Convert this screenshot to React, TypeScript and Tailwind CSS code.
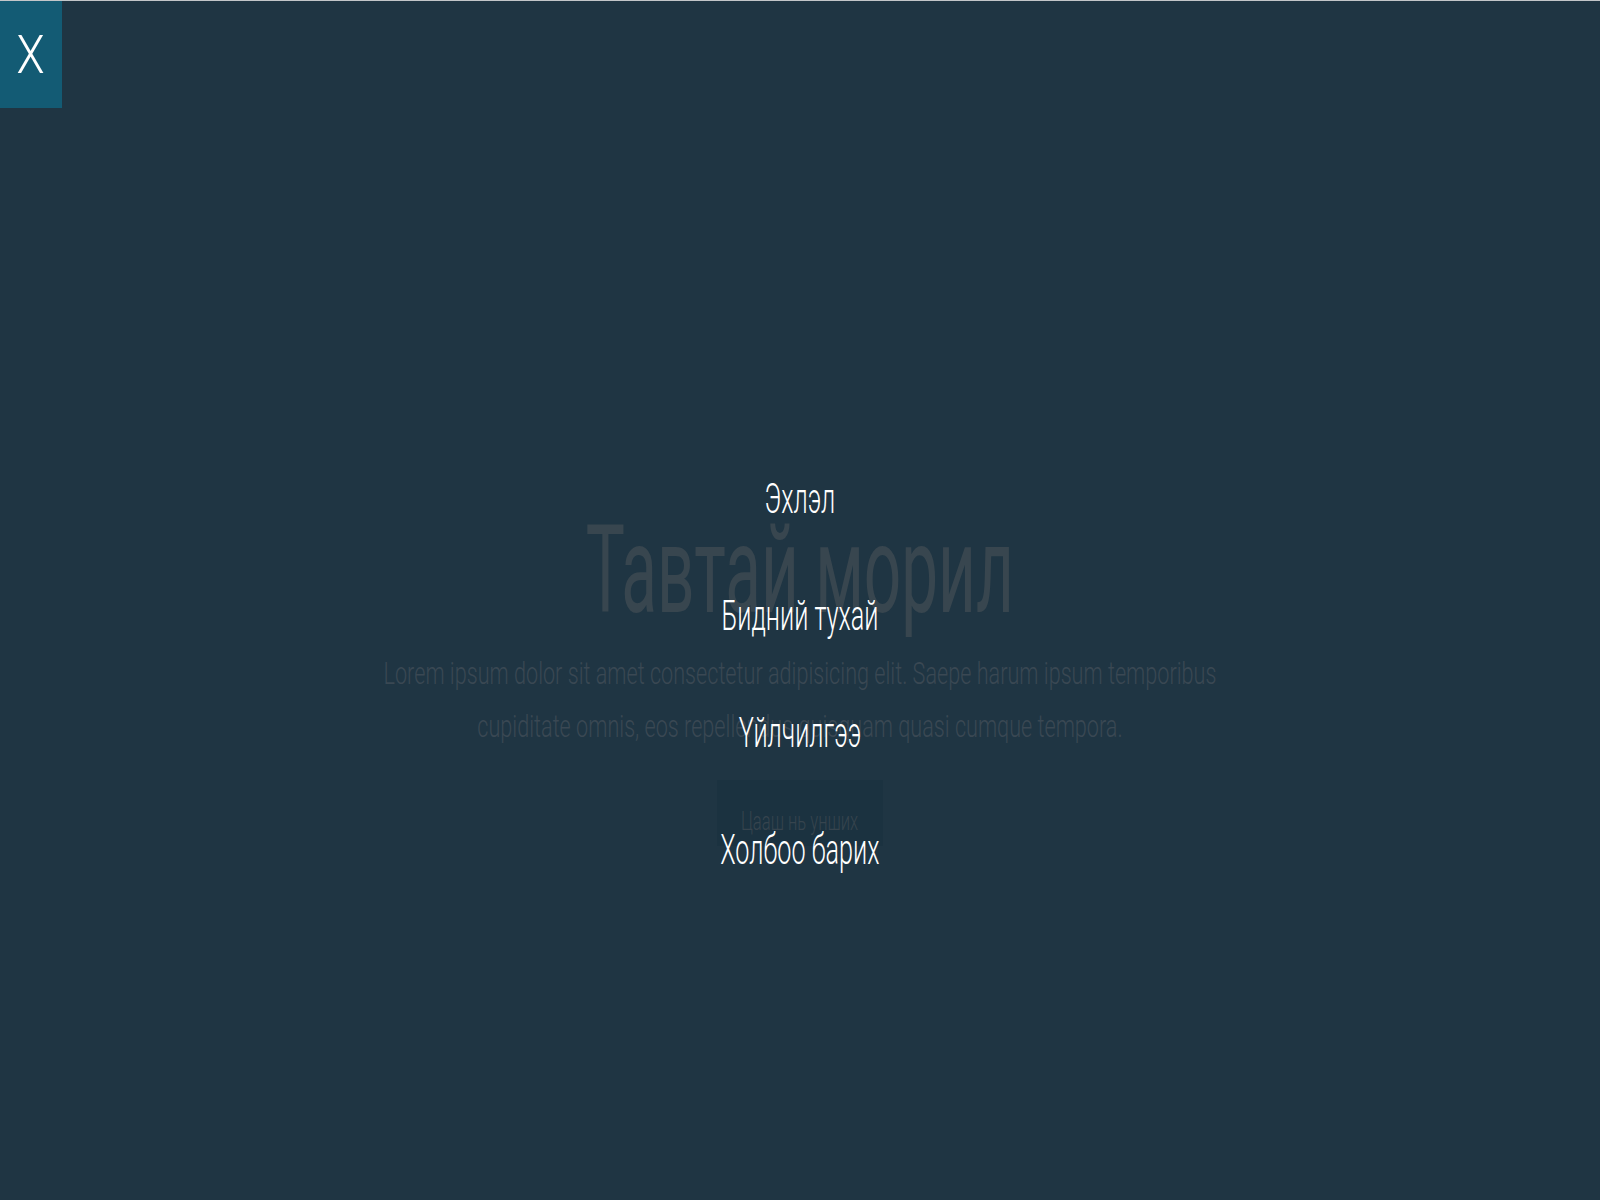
import React from 'react';

const navItems = ['Эхлэл', 'Бидний тухай', 'Үйлчилгээ', 'Холбоо барих'];

export default function App() {
  return (
    <div className="relative h-[1200px] w-full overflow-hidden border-t border-[#c3c6c9] bg-[#1f3543] font-['Roboto',sans-serif]">
      {/* close button */}
      <button className="relative z-20 flex h-[107px] w-[62px] items-center justify-center bg-[#135b74] text-white">
        <span className="block scale-x-[0.85] text-[54px] font-light leading-none">X</span>
      </button>

      {/* hero, faded behind the menu */}
      <section className="flex flex-col items-center pt-[402px]">
        <h1 className="scale-x-[0.538] text-[122px] font-normal leading-none text-[#38464f]">Тавтай морил</h1>
        <p className="mt-[15px] scale-x-[0.676] whitespace-nowrap text-center text-[32px] font-light leading-[53px] text-[#3a4853]">
          Lorem ipsum dolor sit amet consectetur adipisicing elit. Saepe harum ipsum temporibus
          <br />
          cupiditate omnis, eos repellendus quisquam quasi cumque tempora.
        </p>
        <div className="mt-[27px] flex h-[66px] w-[166px] items-center justify-center bg-[#1b3240] pt-[16px]">
          <span className="scale-x-[0.64] whitespace-nowrap text-[26px] font-light text-[#36444e]">Цааш нь унших</span>
        </div>
      </section>

      {/* overlay menu */}
      <nav className="absolute inset-0 z-10 flex flex-col items-center pt-[439px]">
        {navItems.map((item) => (
          <a key={item} href="#" className="flex h-[117px] items-center">
            <span className="block scale-x-[0.6] whitespace-nowrap text-[42px] font-light leading-none text-white">{item}</span>
          </a>
        ))}
      </nav>
    </div>
  );
}
